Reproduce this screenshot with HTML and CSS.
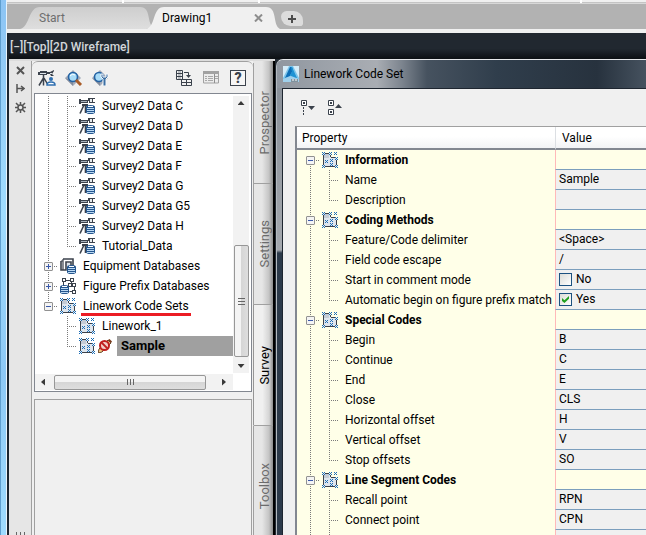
FILE: index.html
```html
<!DOCTYPE html>
<html lang="en">
<head>
  <meta charset="UTF-8">
  <title>Drawing1</title>
  <link rel="stylesheet" href="styles.css">
</head>
<body>
  <!-- shared icons -->
  <svg class="sprite" aria-hidden="true">
    <symbol id="db" viewBox="0 0 9 9">
      <path d="M0 2Q0 0 4.500 0T9 2v5Q9 9 4.500 9T0 7z" fill="#24568f"/>
      <path d="M2 1h5v1H2z" fill="#fff"/>
      <path d="M1 3h7v1H1zM1 5h7v1H1zM1 7h7v1H1z" fill="#b9d8f3"/>
    </symbol>
    <symbol id="i-survey" viewBox="0 0 16 16">
      <path d="M9 0h7v1h-2v3h2v1h-6V3H9z" fill="#3b424c"/>
      <path d="M11 1h2v3h-2z" fill="#e8ecf0"/>
      <path d="M0 1h2v1h7v3H2v1H0z" fill="#3b424c"/>
      <path d="M2 3h6v1H2z" fill="#a9b3bd"/>
      <path d="M3 6h6v2H3z" fill="#3b424c"/>
      <path d="M5 7L1 15.500M6.500 8v7" stroke="#3b424c" stroke-width="1.600" fill="none"/>
      <use href="#db" x="7" y="7" width="9" height="9"/>
    </symbol>
    <symbol id="i-equip" viewBox="0 0 16 16">
      <path d="M3 1h10v7M1 3v9h5V4h5v4" fill="none" stroke="#3b424c" stroke-width="1.600"/>
      <path d="M1 3h2V1M3 3v9" fill="none" stroke="#3b424c" stroke-width="1.200"/>
      <path d="M7 5h3v3H7z" fill="#dce3ea"/>
      <use href="#db" x="7" y="7" width="9" height="9"/>
    </symbol>
    <symbol id="i-figure" viewBox="0 0 16 16">
      <path d="M3.500 8V2.500h8v4h3v7h-5" fill="none" stroke="#3b424c"/>
      <path d="M2 0h4v4H2zM10 0h4v4h-4zM8 5h4v4H8zM12 5h4v4h-4zM12 12h4v4h-4z" fill="#3b424c"/>
      <path d="M3 1h2v2H3zM11 1h2v2h-2zM9 6h2v2H9zM13 6h2v2h-2zM13 13h2v2h-2z" fill="#fff"/>
      <use href="#db" y="7" width="9" height="9"/>
    </symbol>
    <symbol id="i-linework" viewBox="0 0 16 16">
      <path d="M1 1h6v2h2v2h2v1h4v9H1z" fill="#dfe6ee"/>
      <path d="M2 2h5v4H2z" fill="#c3cbd5"/>
      <path d="M1 3h1v10H1zM3 1h4v1H3zM3 14h10v1H3zM14 8h1v5h-1zM8 3h1v2H8zM9 5h4v1H9z" fill="#3b424c"/>
      <g fill="#1b6db5">
        <path id="x" d="M0 0h1v1H0zM2 0h1v1H2zM1 1h1v1H1zM0 2h1v1H0zM2 2h1v1H2z"/>
        <use href="#x" x="7"/><use href="#x" x="12"/><use href="#x" x="3" y="8"/>
        <use href="#x" x="8" y="7"/><use href="#x" x="8" y="11"/>
        <use href="#x" x="13" y="5"/><use href="#x" y="13"/><use href="#x" x="13" y="13"/>
      </g>
    </symbol>
    <symbol id="i-locked" viewBox="0 0 14 14">
      <path d="M0 14l1-4L10 1l3 3-9 9z" fill="#f0c987" stroke="#6a4a2c"/>
      <path d="M10 1l1.500-1L14 2.500 13 4z" fill="#7a3a1c"/>
      <circle cx="6.500" cy="6.500" r="4.500" fill="#f2cfc8" stroke="#c01f1f" stroke-width="2"/>
      <path d="M3.500 3.500l6 6" stroke="#c01f1f" stroke-width="1.800"/>
    </symbol>
  </svg>

  <div class="frame"></div>
  <div class="app">
    <div class="ribbon"><i></i><i></i><i></i><i></i></div>
    <nav class="doc-tabs">
      <button type="button" class="doc-tab">Start</button>
      <button type="button" class="doc-tab current">Drawing1</button>
      <button type="button" class="doc-close" aria-label="Close Drawing1">
        <svg width="9" height="8" viewBox="0 0 9 8"><path d="M1 0.500l7 7M8 0.500l-7 7" stroke="#8d8d8d" stroke-width="2"/></svg>
      </button>
      <button type="button" class="doc-new" aria-label="New drawing">
        <svg width="8" height="8" viewBox="0 0 8 8"><path d="M3 0h2v3h3v2H5v3H3V5H0V3h3z" fill="#4c4c4c"/></svg>
      </button>
    </nav>

    <main class="canvas">
      <div class="view-label">[−][Top][2D Wireframe]</div>
      <div class="windows">

        <section class="palette">
          <div class="gutter">
            <button type="button" aria-label="Close">
              <svg width="9" height="9" viewBox="0 0 9 9"><path d="M1 1l7 7M8 1l-7 7" stroke="#555" stroke-width="2"/></svg>
            </button>
            <button type="button" aria-label="Auto-hide">
              <svg width="9" height="9" viewBox="0 0 9 9"><path d="M1 0v9M1 4.500h6M5 2l3 2.500L5 7" fill="none" stroke="#555" stroke-width="1.500"/></svg>
            </button>
            <button type="button" aria-label="Properties">
              <svg width="11" height="11" viewBox="0 0 11 11"><path d="M5.500 0v11M0 5.500h11M1 1l9 9M10 1l-9 9" stroke="#555" stroke-width="1.500"/><circle cx="5.500" cy="5.500" r="2.500" fill="#e6e6e6" stroke="#555" stroke-width="1.500"/></svg>
            </button>
            <div class="grip"></div>
          </div>

          <div class="pane">
            <div class="toolbar">
              <button type="button" aria-label="Survey user settings">
                <svg width="18" height="16" viewBox="0 0 18 16"><path d="M0 2h2V1h7v1h3l4-2v1l-2 3 2 2h-3l-1-2H9v1H2V5H0z" fill="#3b424c"/><path d="M2 3h6v1H2zM12 3h2v1h-2z" fill="#dce3ea"/><path d="M5.500 5v3L1 15.500M5.500 8v7.500M6 8l4 7" fill="none" stroke="#3b424c" stroke-width="1.500"/><circle cx="13" cy="9" r="2" fill="#2f6fb0"/><path d="M9 15q0-3 4-3t4 3z" fill="#fff" stroke="#2f6fb0" stroke-width="1.500"/></svg>
              </button>
              <button type="button" aria-label="Find">
                <svg width="18" height="16" viewBox="0 0 18 16"><path d="M0 8l8-8 8 8-8 8z" fill="#a4abb9"/><path d="M0 8l8 3v5z" fill="#828c9e"/><circle cx="8" cy="7" r="4.500" fill="#a9dcf8" stroke="#2462a3" stroke-width="1.600"/><path d="M5 6q2-3 5-1" stroke="#fff" fill="none"/><path d="M11 10l5 5" stroke="#a95c28" stroke-width="3"/></svg>
              </button>
              <button type="button" aria-label="Find settings">
                <svg width="18" height="16" viewBox="0 0 18 16"><path d="M0 8l8-8 8 8-8 8z" fill="#a4abb9"/><path d="M0 8l8 3v5z" fill="#828c9e"/><circle cx="7" cy="7" r="4.500" fill="#a9dcf8" stroke="#2462a3" stroke-width="1.600"/><path d="M9 4v3l2 2v7h3V9l2-2V4h-2v3h-3V4z" fill="#3c6fa3" stroke="#f4f8fb"/></svg>
              </button>
              <span class="spring"></span>
              <button type="button" aria-label="Panorama">
                <svg width="18" height="16" viewBox="0 0 18 16"><path d="M.5.500h6v9h-6zM.5 3.500h6M.5 6.500h6M5.500 9.500h10v6h-10zM5.500 12.500h10M10.500 9.500v6M8 2.500h4.500v3" fill="none" stroke="#3b424c"/><path d="M2 2h3M2 5h3M2 8h3" stroke="#8b929b"/><path d="M10 5h5l-2.500 3z" fill="#3b424c"/></svg>
              </button>
              <button type="button" aria-label="Preview" disabled>
                <svg width="18" height="16" viewBox="0 0 18 16"><path d="M.5 2h15v11h-15z" fill="#ececec" stroke="#a2a2a2"/><path d="M0 1h16v3H0z" fill="#a2a2a2"/><path d="M2 6.500h2M5 6.500h5M2 8.500h2M5 8.500h5M2 10.500h2M5 10.500h5M12 6.500h3M12 8.500h3" stroke="#a8a8a8"/><path d="M11.500 4v9" stroke="#8f8f8f"/></svg>
              </button>
              <button type="button" class="help" aria-label="Help">?</button>
            </div>

            <div class="tree-box">
              <ul class="tree">
                <li class="node child rail"><svg class="icon"><use href="#i-survey"/></svg><span>Survey2 Data C</span></li>
                <li class="node child rail"><svg class="icon"><use href="#i-survey"/></svg><span>Survey2 Data D</span></li>
                <li class="node child rail"><svg class="icon"><use href="#i-survey"/></svg><span>Survey2 Data E</span></li>
                <li class="node child rail"><svg class="icon"><use href="#i-survey"/></svg><span>Survey2 Data F</span></li>
                <li class="node child rail"><svg class="icon"><use href="#i-survey"/></svg><span>Survey2 Data G</span></li>
                <li class="node child rail"><svg class="icon"><use href="#i-survey"/></svg><span>Survey2 Data G5</span></li>
                <li class="node child rail"><svg class="icon"><use href="#i-survey"/></svg><span>Survey2 Data H</span></li>
                <li class="node child rail last"><svg class="icon"><use href="#i-survey"/></svg><span>Tutorial_Data</span></li>
                <li class="node rail"><button type="button" class="toggle closed" aria-label="Expand"></button><svg class="icon"><use href="#i-equip"/></svg><span>Equipment Databases</span></li>
                <li class="node rail"><button type="button" class="toggle closed" aria-label="Expand"></button><svg class="icon"><use href="#i-figure"/></svg><span>Figure Prefix Databases</span></li>
                <li class="node rail-end"><button type="button" class="toggle" aria-label="Collapse"></button><svg class="icon"><use href="#i-linework"/></svg><span class="marked">Linework Code Sets</span></li>
                <li class="node child"><svg class="icon"><use href="#i-linework"/></svg><span>Linework_1</span></li>
                <li class="node child last"><svg class="icon"><use href="#i-linework"/></svg><svg class="lock"><use href="#i-locked"/></svg><span class="selected">Sample</span></li>
              </ul>
              <div class="vbar">
                <i class="arrow up"></i>
                <i class="thumb"></i>
                <i class="arrow down"></i>
              </div>
              <div class="hbar">
                <i class="arrow left"></i>
                <i class="thumb"></i>
                <i class="arrow right"></i>
              </div>
            </div>

            <div class="preview"></div>
          </div>

          <nav class="side-tabs">
            <button type="button"><span>Prospector</span></button>
            <button type="button"><span>Settings</span></button>
            <button type="button" class="current"><span>Survey</span></button>
            <button type="button"><span>Toolbox</span></button>
          </nav>
        </section>

        <section class="dialog">
          <header class="title-bar">
            <svg width="16" height="16" viewBox="0 0 16 16"><path d="M0 0h16v16H0z" fill="#d5ecf8"/><path d="M0 12L6 0h4l6 12v1H0z" fill="#7cc4ea"/><path d="M2 12L7 1h2l1 3-3 6z" fill="#0d6fb8"/><path d="M8 1h1l5 11H9L7 9l2-3z" fill="#1e93d4"/><path d="M0 13l8-3 8 3v3H0z" fill="#9fd0ec"/><path d="M8 13h7v3H8z" fill="#7f929e"/><path d="M9 14h2M12 14h2" stroke="#fff"/></svg>
            <h1>Linework Code Set</h1>
          </header>
          <div class="dialog-body">
            <div class="dialog-tools">
              <button type="button" aria-label="Collapse all">
                <svg width="15" height="16" viewBox="0 0 15 16"><path d="M.5.500h5v5h-5z" fill="#fff" stroke="#3b424c"/><path d="M2 2h2v2H2z" fill="#3b424c"/><path d="M2.500 7v9" stroke="#3b424c" stroke-dasharray="2 1"/><path d="M7 6h7l-3.500 4z" fill="#3b424c"/></svg>
              </button>
              <button type="button" aria-label="Expand all">
                <svg width="15" height="16" viewBox="0 0 15 16"><path d="M.5.500h5v5h-5zM.5 9.500h5v5h-5z" fill="#fff" stroke="#3b424c"/><path d="M2 2h2v2H2zM2 11h2v2H2z" fill="#3b424c"/><path d="M7 8h7l-3.500-4z" fill="#3b424c"/></svg>
              </button>
            </div>

            <table class="props">
              <thead>
                <tr><th scope="col" class="name-col">Property</th><th scope="col">Value</th></tr>
              </thead>
              <tbody>
                <tr class="group"><th scope="row"><div class="node rail-start"><button type="button" class="toggle" aria-label="Collapse"></button><svg class="icon"><use href="#i-linework"/></svg><span>Information</span></div></th><td></td></tr>
                <tr><th scope="row"><div class="node child rail"><span>Name</span></div></th><td>Sample</td></tr>
                <tr><th scope="row"><div class="node child rail last"><span>Description</span></div></th><td></td></tr>

                <tr class="group"><th scope="row"><div class="node rail"><button type="button" class="toggle" aria-label="Collapse"></button><svg class="icon"><use href="#i-linework"/></svg><span>Coding Methods</span></div></th><td></td></tr>
                <tr><th scope="row"><div class="node child rail"><span>Feature/Code delimiter</span></div></th><td>&lt;Space&gt;</td></tr>
                <tr><th scope="row"><div class="node child rail"><span>Field code escape</span></div></th><td>/</td></tr>
                <tr><th scope="row"><div class="node child rail"><span>Start in comment mode</span></div></th><td><label class="check"><input type="checkbox">No</label></td></tr>
                <tr><th scope="row"><div class="node child rail last"><span>Automatic begin on figure prefix match</span></div></th><td><label class="check"><input type="checkbox" checked>Yes</label></td></tr>

                <tr class="group"><th scope="row"><div class="node rail"><button type="button" class="toggle" aria-label="Collapse"></button><svg class="icon"><use href="#i-linework"/></svg><span>Special Codes</span></div></th><td></td></tr>
                <tr><th scope="row"><div class="node child rail"><span>Begin</span></div></th><td>B</td></tr>
                <tr><th scope="row"><div class="node child rail"><span>Continue</span></div></th><td>C</td></tr>
                <tr><th scope="row"><div class="node child rail"><span>End</span></div></th><td>E</td></tr>
                <tr><th scope="row"><div class="node child rail"><span>Close</span></div></th><td>CLS</td></tr>
                <tr><th scope="row"><div class="node child rail"><span>Horizontal offset</span></div></th><td>H</td></tr>
                <tr><th scope="row"><div class="node child rail"><span>Vertical offset</span></div></th><td>V</td></tr>
                <tr><th scope="row"><div class="node child rail last"><span>Stop offsets</span></div></th><td>SO</td></tr>

                <tr class="group"><th scope="row"><div class="node rail"><button type="button" class="toggle" aria-label="Collapse"></button><svg class="icon"><use href="#i-linework"/></svg><span>Line Segment Codes</span></div></th><td></td></tr>
                <tr><th scope="row"><div class="node child rail"><span>Recall point</span></div></th><td>RPN</td></tr>
                <tr><th scope="row"><div class="node child rail"><span>Connect point</span></div></th><td>CPN</td></tr>
                <tr><th scope="row"><div class="node child rail"></div></th><td></td></tr>
              </tbody>
            </table>
          </div>
        </section>
      </div>
    </main>
  </div>
</body>
</html>
```

FILE: styles.css
```css
* {
  box-sizing: border-box;
}
body {
  margin: 0;
  height: 100vh;
  display: flex;
  overflow: hidden;
  font: 12px/20px Roboto, "Segoe UI", sans-serif;
  color: #000;
}
button {
  font: inherit;
  color: inherit;
  border: 0;
  padding: 0;
  background: none;
}
svg {
  display: block;
}
.sprite {
  position: absolute;
  width: 0;
  height: 0;
}

/* Window frame and document tabs */
.frame {
  flex: none;
  width: 7px;
  border-left: 1px solid #5f9fd0;
  border-right: 1px solid #e9f4fc;
  background: linear-gradient(#8cc4f4, #9fdcff 40%, #8cc8f6 70%, #9fdcff);
}
.app {
  flex: 1;
  min-width: 0;
  display: flex;
  flex-direction: column;
}
.ribbon {
  flex: none;
  height: 4px;
  display: flex;
  gap: 2px;
  background: #fff;
  border-bottom: 1px solid #d8d8d8;
}
.ribbon i {
  flex: 0 0 134px;
  background: #f0f0f0;
  border-bottom: 1px solid #c4c4c4;
}
.ribbon i:first-child {
  flex-basis: 115px;
}
.ribbon i:nth-child(3) {
  flex-basis: 320px;
}
.ribbon i:last-child {
  flex: 1;
}
.doc-tabs {
  flex: none;
  height: 29px;
  display: flex;
  align-items: flex-end;
  padding-left: 13px;
  background: #b2b2b2;
  border-bottom: 4px solid #f0f0f0;
}
.doc-tab {
  position: relative;
  isolation: isolate;
  width: 134px;
  height: 22px;
  padding-left: 19px;
  margin-right: -8px;
  text-align: left;
  color: #6e6e6e;
}
.doc-tab::before {
  content: "";
  position: absolute;
  inset: 0;
  z-index: -1;
  background: linear-gradient(#cecece, #dedede);
  clip-path: path("M0 22C10 20 8 0 20 0H120C132 0 126 18 134 20L126 22Z");
}
.doc-tab.current {
  padding-left: 16px;
  color: #000;
}
.doc-tab.current::before {
  background: #f0f0f0;
  clip-path: path("M0 22C10 20 6 0 18 0H120C132 0 126 18 134 22Z");
}
.doc-close {
  position: relative;
  height: 22px;
  margin: 0 18px 0 -18px;
}
.doc-new {
  display: flex;
  align-items: center;
  justify-content: center;
  width: 22px;
  height: 15px;
  margin-bottom: 3px;
  background: #dcdcdc;
  border-radius: 6px 10px 3px 10px;
}

/* Drawing area */
.canvas {
  flex: 1;
  min-height: 0;
  display: flex;
  flex-direction: column;
  border-left: 2px solid #1b2530;
  background: #212830;
}
.view-label {
  flex: none;
  height: 26px;
  line-height: 28px;
  color: #d2d6da;
  padding-left: 1px;
  font-weight: 500;
  background: linear-gradient(#212830 60%, #0c0f13);
}
.windows {
  flex: 1;
  min-height: 0;
  display: flex;
  gap: 1px;
}

/* Tool palette */
.palette {
  flex: none;
  display: flex;
  background: #f0f0f0;
  border-top: 2px solid #dcdcdc;
}
.gutter {
  width: 23px;
  display: flex;
  flex-direction: column;
  align-items: center;
  gap: 9px;
  padding: 5px 0 0 1px;
  background: #e6e6e6;
  border-right: 1px solid #a0a0a0;
}
.grip {
  width: 9px;
  height: 3px;
  margin-top: auto;
  background: repeating-linear-gradient(90deg, #666 0 1px, transparent 1px 4px);
}
.pane {
  width: 221px;
  display: flex;
  flex-direction: column;
  padding: 0 1px 0 2px;
  border-top: 1px solid #a0a0a0;
  border-radius: 6px 6px 0 0;
}
.toolbar {
  height: 31px;
  display: flex;
  gap: 9px;
  align-items: center;
  padding: 0 6px 0 4px;
}
.toolbar .spring {
  flex: 1;
}
.help {
  width: 16px;
  height: 16px;
  border: 1px solid #3b424c;
  background: #f6f6f6;
  color: #3b424c;
  font-size: 14px;
  font-weight: 900;
  line-height: 14px;
}
.tree-box {
  display: grid;
  grid-template: 280px 17px / 1fr 18px;
  border: 1px solid #828790;
  background: #fff;
}
.tree {
  list-style: none;
  margin: 0;
  padding: 2px 0 0 4px;
}
.vbar, .hbar {
  display: flex;
  align-items: center;
  justify-content: space-between;
  background: #f2f2f2;
}
.vbar {
  flex-direction: column;
  margin: 2px 2px 1px 0;
  padding: 5px 0;
}
.hbar {
  margin-bottom: 1px;
  padding: 0 7px 0 6px;
}
.vbar .thumb, .hbar .thumb {
  border: 1px solid #979797;
  border-radius: 2px;
}
.vbar .thumb {
  width: 15px;
  height: 112px;
  margin: auto 0 7px;
  background:
    repeating-linear-gradient(#666 0 1px, transparent 1px 3px) center / 7px 7px no-repeat,
    linear-gradient(90deg, #f4f4f4 45%, #d6d6d6 50%, #dedede);
}
.hbar .thumb {
  width: 152px;
  height: 15px;
  margin: 0 auto 0 9px;
  background:
    repeating-linear-gradient(90deg, #666 0 1px, transparent 1px 3px) center / 7px 6px no-repeat,
    linear-gradient(#f4f4f4 45%, #d6d6d6 50%, #dedede);
}
.arrow {
  width: 7px;
  height: 4px;
  background: #3a3a3a;
}
.arrow.up { clip-path: polygon(50% 0, 100% 100%, 0 100%); }
.arrow.down { clip-path: polygon(0 0, 100% 0, 50% 100%); }
.arrow.left, .arrow.right {
  width: 4px;
  height: 7px;
}
.arrow.left { clip-path: polygon(100% 0, 100% 100%, 0 50%); }
.arrow.right { clip-path: polygon(0 0, 100% 50%, 0 100%); }
.preview {
  flex: 1;
  margin-top: 7px;
  border: 1px solid #a0a0a0;
  border-bottom: 0;
}
.side-tabs {
  width: 22px;
  display: flex;
  flex-direction: column;
  padding-top: 2px;
  border-right: 2px solid #000;
  background: linear-gradient(90deg, #e6e6e6 45%, #c4c4c4 80%, #8c8c8c);
}
.side-tabs button {
  flex: 0 0 121px;
  display: flex;
  align-items: center;
  justify-content: center;
  padding-left: 2px;
  border: 1px solid #a0a0a0;
  border-width: 0 0 1px 1px;
  color: #6b6b6b;
}
.side-tabs .current {
  border-left-color: transparent;
  color: #000;
  background: linear-gradient(90deg, #f0f0f0 45%, #d4d4d4 80%, #8c8c8c);
}
.side-tabs span {
  font-size: 13px;
  writing-mode: vertical-rl;
  transform: rotate(180deg);
}

/* Tree rows, shared by the palette and the property grid */
.node {
  --dots-y: repeating-linear-gradient(#7a7a7a 0 1px, transparent 1px 2px);
  --dots-x: repeating-linear-gradient(90deg, #7a7a7a 0 1px, transparent 1px 2px);
  --rail: 0;
  --rail-top: 0;
  --branch: 20px;
  height: 20px;
  display: flex;
  align-items: center;
  padding-left: 5px;
  white-space: nowrap;
  background-image: var(--dots-y), var(--dots-x);
  background-size: 1px var(--rail), 9px 1px;
  background-position: 9px var(--rail-top), 9px 10px;
  background-repeat: no-repeat;
}
.rail {
  --rail: 20px;
}
.rail-end {
  --rail: 10px;
}
.rail-start {
  --rail: 10px;
  --rail-top: 10px;
}
.child {
  padding-left: 38px;
  background-image: var(--dots-y), var(--dots-y), var(--dots-x);
  background-size: 1px var(--rail), 1px var(--branch), 9px 1px;
  background-position: 9px 0, 28px 0, 28px 10px;
}
.last {
  --branch: 10px;
}
.toggle {
  flex: none;
  width: 9px;
  height: 9px;
  margin-right: 5px;
  border: 1px solid #919191;
  border-radius: 1px;
  background: linear-gradient(#3a58a8, #3a58a8) center / 5px 1px no-repeat, #f4f4f4;
}
.toggle.closed {
  background:
    linear-gradient(#3a58a8, #3a58a8) center / 5px 1px no-repeat,
    linear-gradient(#3a58a8, #3a58a8) center / 1px 5px no-repeat,
    #f4f4f4;
}
.icon {
  flex: none;
  width: 16px;
  height: 16px;
  margin: 0 1px 0 2px;
}
.node span {
  margin-left: 6px;
}
.lock {
  flex: none;
  width: 14px;
  height: 14px;
  margin-left: 2px;
}
.node .selected {
  flex: 1;
  margin-left: 5px;
  padding-left: 4px;
  font-size: 13px;
  font-weight: bold;
  background: #a0a0a0;
}
.marked {
  position: relative;
}
.marked::after {
  content: "";
  position: absolute;
  left: -2px;
  right: -2px;
  bottom: 0;
  height: 3px;
  background: #ec1c24;
}

/* Linework Code Set dialog */
.dialog {
  flex: 1;
  min-width: 0;
  display: flex;
  flex-direction: column;
  border-top: 1px solid #e6e8ea;
  border-left: 1px solid #b4bac0;
  border-radius: 7px 0 0 0;
  padding-left: 5px;
  background: linear-gradient(#868d96, #a4a8ae 190px, #2c3a4a 193px);
}
.title-bar {
  flex: none;
  height: 28px;
  display: flex;
  align-items: center;
  gap: 5px;
  margin-left: -5px;
  padding-left: 6px;
  background: linear-gradient(90deg, #9097a0, #a9adb3 100px, #7c848e 125px, #46525f 150px, #303e4c 220px, #27323e 320px, #46525f);
  border-top-left-radius: 6px;
}
.title-bar h1 {
  margin: 0;
  font-size: 12px;
  font-weight: normal;
}
.dialog-body {
  flex: 1;
  min-height: 0;
  border: 1px solid #1e2630;
  border-width: 1px 0 0 1px;
  background: #f0f0f0;
  padding: 11px 0 0 12px;
}
.dialog-tools {
  display: flex;
  gap: 12px;
  padding: 0 0 10px 6px;
}
.props {
  width: 100%;
  table-layout: fixed;
  border-spacing: 0;
  border-left: 2px solid #828790;
  border-top: 1px solid #a0a0a0;
}
.props th, .props td {
  height: 20px;
  padding: 0;
  text-align: left;
  font-weight: normal;
}
.props thead th {
  height: 23px;
  padding-left: 6px;
  background: linear-gradient(#fff 45%, #f2f3f5);
  border-bottom: 2px solid #828790;
  border-left: 1px solid #dcdfe3;
}
.props .name-col {
  width: 258px;
  padding-left: 5px;
  border-left: 0;
}
.props tbody th {
  padding-left: 4px;
  background: #ffffe8;
}
.props td {
  padding-left: 3px;
  line-height: 19px;
  background: #f0f0f0;
  border-left: 1px solid #ffb9b9;
  border-bottom: 1px solid #7b9ebd;
}
.props .group td {
  background: #ffffe8;
}
.group span {
  font-weight: bold;
}
.check {
  display: flex;
  align-items: center;
  gap: 4px;
}
.check input {
  appearance: none;
  width: 13px;
  height: 13px;
  margin: 0;
  border: 1px solid #1c5180;
  background: linear-gradient(135deg, #dcdcd7, #fff);
}
.check input:checked::before {
  content: "";
  display: block;
  width: 7px;
  height: 7px;
  margin: 2px;
  background: #21a121;
  clip-path: polygon(0 30%, 35% 60%, 100% 0, 100% 40%, 35% 100%, 0 70%);
}
```
